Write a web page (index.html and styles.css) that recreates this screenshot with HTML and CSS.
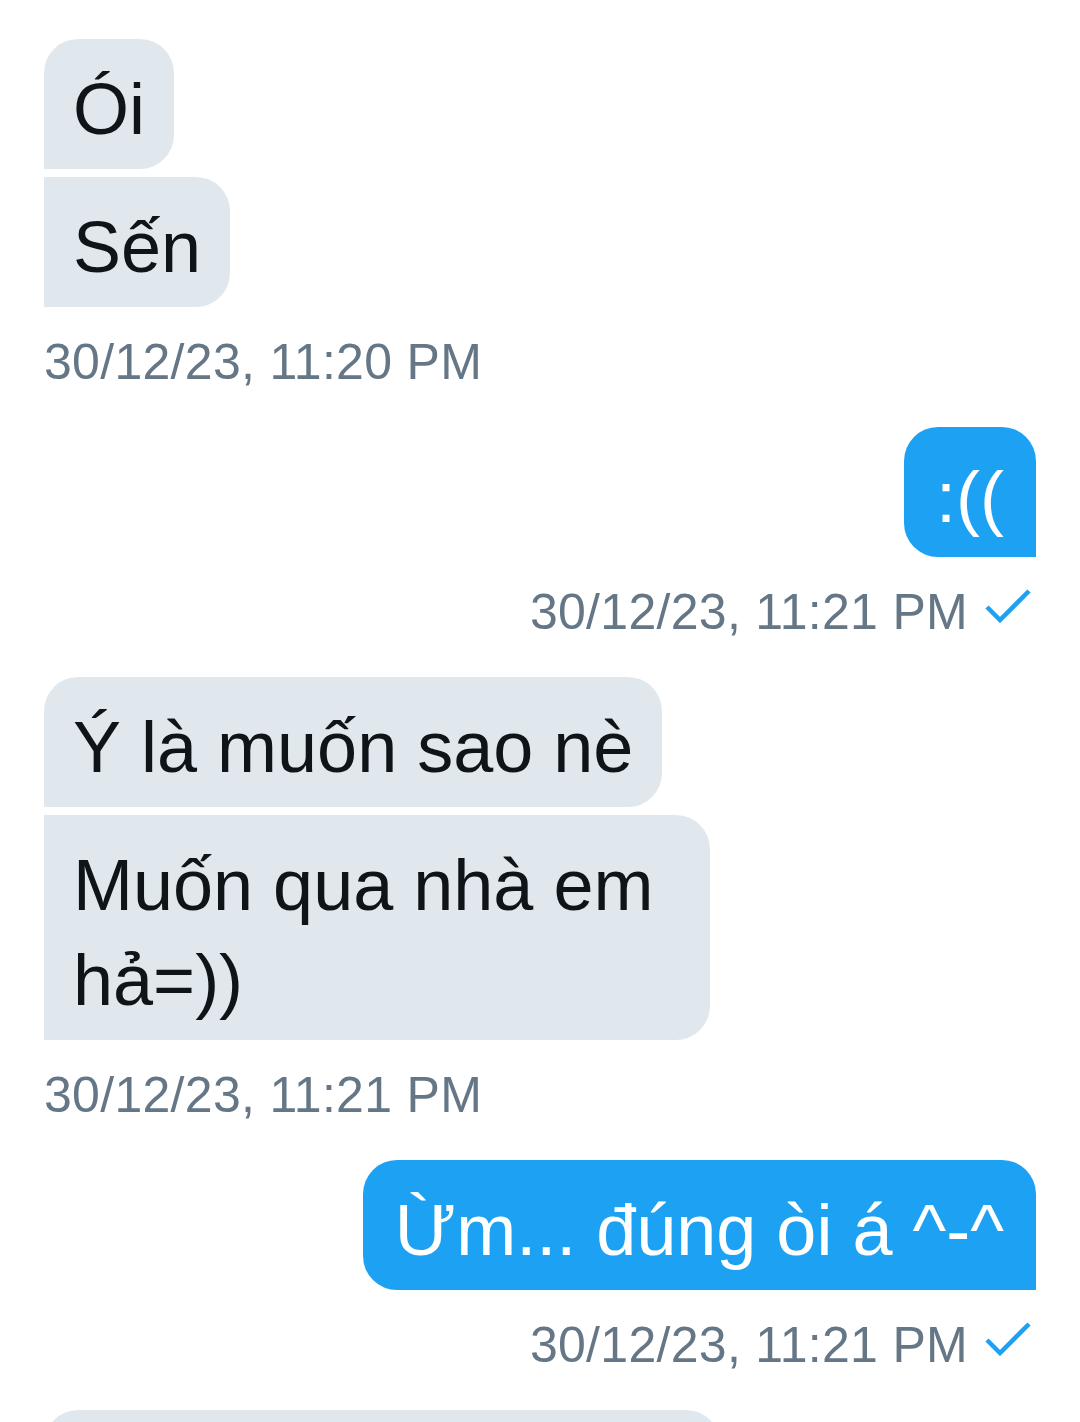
FILE: index.html
```html
<!DOCTYPE html>
<html lang="vi">
<head>
<meta charset="utf-8">
<title>Messages</title>
<link rel="stylesheet" href="styles.css">
</head>
<body>
<div class="chat">
  <div class="group in">
    <div class="bubble first">Ói</div>
    <div class="bubble">Sến</div>
    <div class="time">30/12/23, 11:20 PM</div>
  </div>
  <div class="group out">
    <div class="bubble">:((</div>
    <div class="time">30/12/23, 11:21 PM<svg class="check" viewBox="0 0 46 34" width="46" height="34"><path d="M2 18 L15 31 L44 2" fill="none" stroke="#1DA1F2" stroke-width="4.5"/></svg></div>
  </div>
  <div class="group in">
    <div class="bubble first">Ý là muốn sao nè</div>
    <div class="bubble">Muốn qua nhà em hả=))</div>
    <div class="time">30/12/23, 11:21 PM</div>
  </div>
  <div class="group out">
    <div class="bubble">Ừm... đúng òi á ^-^</div>
    <div class="time">30/12/23, 11:21 PM<svg class="check" viewBox="0 0 46 34" width="46" height="34"><path d="M2 18 L15 31 L44 2" fill="none" stroke="#1DA1F2" stroke-width="4.5"/></svg></div>
  </div>
  <div class="group in">
    <div class="bubble first tail">&nbsp;</div>
  </div>
</div>
</body>
</html>
```

FILE: styles.css
```css
html, body {
  margin: 0;
  padding: 0;
  background: #ffffff;
}
body {
  height: 1422px;
  overflow: hidden;
  font-family: "Liberation Sans", Arial, sans-serif;
}
.chat {
  display: flex;
  flex-direction: column;
  gap: 35px;
  padding: 39px 44px 0 44px;
}
.group {
  display: flex;
  flex-direction: column;
  gap: 8px;
}
.group.in {
  align-items: flex-start;
}
.group.out {
  align-items: flex-end;
}
.bubble {
  box-sizing: border-box;
  max-width: 666px;
  font-size: 72px;
  line-height: 95px;
  padding: 23px 29px 12px 29px;
}
.in .bubble {
  background: #e1e8ed;
  color: #0f1419;
  border-radius: 0 34px 34px 0;
}
.in .bubble.first {
  border-top-left-radius: 34px;
}
.out .bubble {
  max-width: 720px;
  white-space: nowrap;
  padding-left: 32px;
  padding-right: 32px;
  background: #1da1f2;
  color: #ffffff;
  border-radius: 34px 34px 0 34px;
}
.bubble.tail {
  width: 676px;
  max-width: none;
  height: 130px;
}
.time {
  margin-top: 17px;
  display: flex;
  align-items: center;
  gap: 17px;
  font-size: 50px;
  line-height: 60px;
  letter-spacing: 0.3px;
  color: #657786;
}
.out .time {
  padding-right: 5px;
}
.check {
  display: block;
  margin-bottom: 12px;
}
```
